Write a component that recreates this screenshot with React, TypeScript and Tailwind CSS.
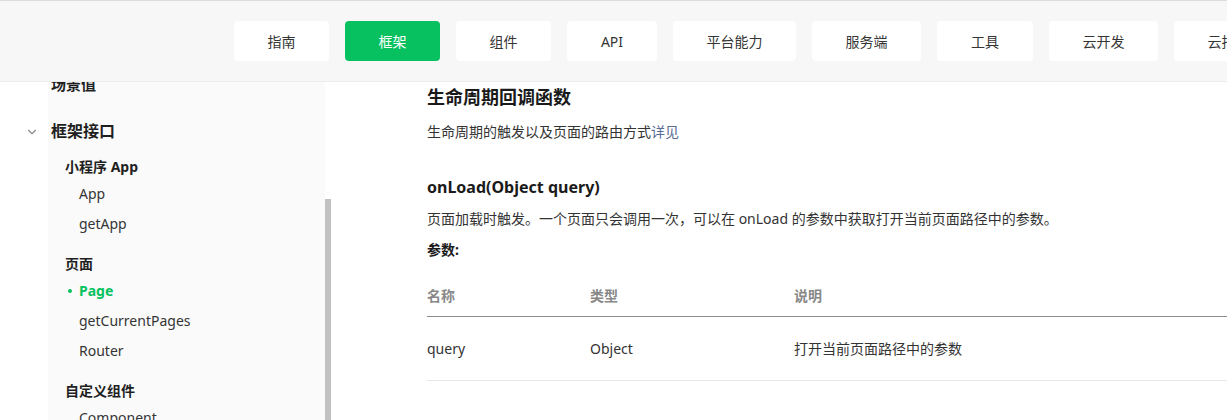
import React from "react";
import { ChevronDown } from "lucide-react";

const navItems: { label: string; w: string }[] = [
  { label: "指南", w: "w-[95px]" },
  { label: "框架", w: "w-[95px]" },
  { label: "组件", w: "w-[95px]" },
  { label: "API", w: "w-[90px]" },
  { label: "平台能力", w: "w-[123px]" },
  { label: "服务端", w: "w-[109px]" },
  { label: "工具", w: "w-[96px]" },
  { label: "云开发", w: "w-[109px]" },
  { label: "云托管", w: "w-[109px]" },
];

function Leaf({ children, active }: { children: React.ReactNode; active?: boolean }) {
  return (
    <div className="relative h-[30px] flex items-center pl-[79px]">
      {active && <span className="absolute left-[68px] top-[14px] w-[4px] h-[4px] rounded-full bg-[#07c160]" />}
      <span className={active ? "text-[14px] font-bold text-[#07c160]" : "text-[14px] text-[#353535]"}>{children}</span>
    </div>
  );
}

function Group({ children, first }: { children: React.ReactNode; first?: boolean }) {
  return (
    <div className={(first ? "mt-[8px] " : "mt-[13px] ") + "h-[24px] flex items-center pl-[65px] text-[14px] font-bold text-[#1f1f1f]"}>
      {children}
    </div>
  );
}

export default function App() {
  return (
    <div
      className="w-[1227px] h-[420px] overflow-hidden bg-white flex flex-col"
      style={{ fontFamily: "'Noto Sans', 'Noto Sans CJK SC', sans-serif" }}
    >
      <header className="relative z-10 h-[82px] shrink-0 border-t border-b border-t-[#dcdcdc] border-b-[#ececec] bg-[#f7f7f7] flex items-center pl-[234px] gap-[16px] whitespace-nowrap">
        {navItems.map((n) => (
          <div
            key={n.label}
            className={
              "h-[40px] shrink-0 rounded-[4px] flex items-center justify-center text-[14px] " +
              n.w +
              " " +
              (n.label === "框架" ? "bg-[#07c160] text-white" : "bg-white text-[#353535]")
            }
          >
            {n.label}
          </div>
        ))}
      </header>

      <div className="flex flex-1 min-h-0 overflow-hidden">
        <aside className="w-[325px] shrink-0 flex">
          <div className="w-[48px] bg-white" />
          <div className="flex-1 bg-[#fafafa]" />
        </aside>
        <div className="w-[325px] shrink-0 -ml-[325px] relative">
          <div className="-mt-[13px] h-[30px] flex items-center pl-[51px] text-[15px] font-bold text-[#1f1f1f]">场景值</div>
          <div className="mt-[17px] h-[30px] flex items-center pl-[51px] text-[16px] font-bold text-[#1f1f1f] relative">
            <ChevronDown className="absolute left-[25px] top-[9px] text-[#8c8c8c]" size={14} strokeWidth={2} />
            框架接口
          </div>
          <Group first>小程序 App</Group>
          <Leaf>App</Leaf>
          <Leaf>getApp</Leaf>
          <Group>页面</Group>
          <Leaf active>Page</Leaf>
          <Leaf>getCurrentPages</Leaf>
          <Leaf>Router</Leaf>
          <Group>自定义组件</Group>
          <Leaf>Component</Leaf>
        </div>
        <div className="w-[6px] shrink-0 flex flex-col">
          <div className="h-[117px]" />
          <div className="flex-1 bg-[#c1c1c1]" />
        </div>

        <main className="flex-1 min-w-0 pl-[96px] pt-[1px] text-[#333]">
          <h2 className="h-[28px] flex items-center text-[18px] font-bold text-[#1a1a1a]">生命周期回调函数</h2>
          <p className="mt-[9px] h-[22px] flex items-center text-[14px] text-[#333]">
            生命周期的触发以及页面的路由方式<span className="text-[#576b95]">详见</span>
          </p>
          <h3 className="mt-[32px] h-[26px] flex items-center text-[16px] font-bold text-[#1a1a1a]">onLoad(Object query)</h3>
          <p className="mt-[7px] h-[22px] flex items-center text-[14px] text-[#333] whitespace-nowrap">
            页面加载时触发。一个页面只会调用一次，可以在 onLoad 的参数中获取打开当前页面路径中的参数。
          </p>
          <p className="mt-[9px] h-[22px] flex items-center text-[14px] font-bold text-[#1a1a1a]">参数:</p>
          <div className="mt-[15px] w-[820px]">
            <div className="h-[42px] flex items-center border-b border-[#8c8c8c] text-[14px] font-semibold text-[#888]">
              <div className="w-[163px]">名称</div>
              <div className="w-[204px]">类型</div>
              <div>说明</div>
            </div>
            <div className="h-[64px] flex items-center border-b border-[#e6e6e6] text-[14px] text-[#333]">
              <div className="w-[163px]">query</div>
              <div className="w-[204px]">Object</div>
              <div>打开当前页面路径中的参数</div>
            </div>
          </div>
        </main>
      </div>
    </div>
  );
}
